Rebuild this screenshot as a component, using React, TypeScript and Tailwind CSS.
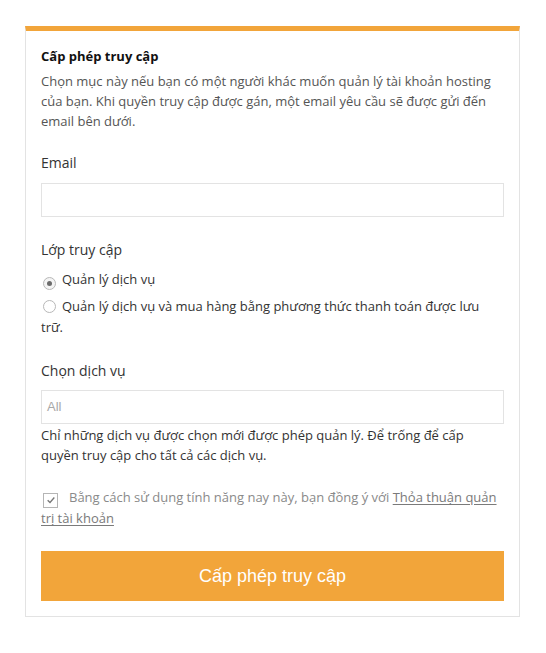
export default function App() {
  return (
    <div className="min-h-screen bg-white pt-[26px] pl-[25px] font-['Open_Sans',sans-serif]">
      <div className="w-[495px] border border-[#e3e3e3] border-t-[5px] border-t-[#f2a53a] px-[15px] pt-[15px] pb-[15px]">
        {/* heading */}
        <h2 className="text-[13px] leading-[20px] font-bold text-[#111]">Cấp phép truy cập</h2>
        <p className="mt-[5px] text-[13px] leading-[20px] text-[#555]">
          Chọn mục này nếu bạn có một người khác muốn quản lý tài khoản hosting của bạn. Khi quyền truy cập
          được gán, một email yêu cầu sẽ được gửi đến email bên dưới.
        </p>

        {/* email */}
        <label className="mt-[22px] block text-[14px] leading-[20px] text-[#333]">Email</label>
        <input
          type="email"
          className="mt-[10px] block h-[34px] w-full border border-[#e3e3e3] bg-white px-2 text-[13px] outline-none"
        />

        {/* access level */}
        <div className="mt-[23px] text-[14px] leading-[20px] text-[#333]">Lớp truy cập</div>
        <div className="mt-[9px] text-[13px] leading-[20px] text-[#333]">
          <span className="relative top-[2px] mr-[6px] ml-[2px] inline-flex h-[13px] w-[13px] items-center justify-center rounded-full border border-[#b8b8b8] bg-[#f4f4f4]">
            <span className="h-[5px] w-[5px] rounded-full bg-[#6b6b6b]" />
          </span>
          Quản lý dịch vụ
        </div>
        <div className="mt-[7px] text-[13px] leading-[21px] text-[#333]">
          <span className="relative top-[2px] mr-[6px] ml-[2px] inline-block h-[13px] w-[13px] rounded-full border border-[#b8b8b8] bg-white" />
          Quản lý dịch vụ và mua hàng bằng phương thức thanh toán được lưu trữ.
        </div>

        {/* services */}
        <div className="mt-[23px] text-[14px] leading-[20px] text-[#333]">Chọn dịch vụ</div>
        <div className="mt-[9px] flex h-[34px] w-full items-center border border-[#e3e3e3] px-[5px] font-['Liberation_Sans',Arial,sans-serif] text-[13px] text-[#a8a8a8]">
          All
        </div>
        <p className="mt-[1px] text-[13px] leading-[20px] text-[#333]">
          Chỉ những dịch vụ được chọn mới được phép quản lý. Để trống để cấp quyền truy cập cho tất cả các dịch vụ.
        </p>

        {/* agreement */}
        <div className="mt-[22px] text-[13px] leading-[21px] text-[#8a8a8a]">
          <span className="relative top-[3px] mr-[11px] ml-[2px] inline-flex h-[15px] w-[15px] items-center justify-center border border-[#b5b5b5] bg-white">
            <svg viewBox="0 0 12 12" className="h-[10px] w-[10px]" fill="none" stroke="#777" strokeWidth="1.6">
              <path d="M2 6.2 L4.8 9 L10 3" />
            </svg>
          </span>
          Bằng cách sử dụng tính năng nay này, bạn đồng ý với{" "}
          <a className="text-[#7a7a7a] underline underline-offset-2">Thỏa thuận quản trị tài khoản</a>
        </div>

        {/* submit */}
        <button className="mt-[22px] flex h-[50px] w-full items-center justify-center bg-[#f2a53a] font-['Liberation_Sans',Arial,sans-serif] text-[18px] text-white">
          Cấp phép truy cập
        </button>
      </div>
    </div>
  );
}
